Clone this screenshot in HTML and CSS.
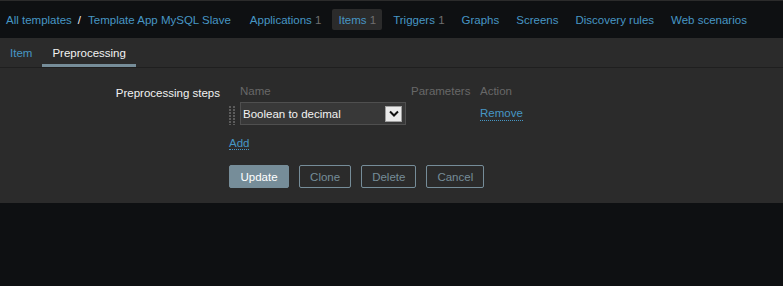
FILE: index.html
```html
<!DOCTYPE html>
<html lang="en">
<head>
<meta charset="utf-8">
<title>Template App MySQL Slave - Items</title>
<link rel="stylesheet" href="styles.css">
</head>
<body>
<nav class="topnav">
  <div class="crumbs">
    <a href="#" class="link">All templates</a>
    <span class="sep">/</span>
    <a href="#" class="link">Template App MySQL Slave</a>
  </div>
  <ul class="navlist">
    <li class="navitem"><a href="#" class="link">Applications</a> <span class="count">1</span></li>
    <li class="navitem selected"><a href="#" class="link">Items</a> <span class="count">1</span></li>
    <li class="navitem"><a href="#" class="link">Triggers</a> <span class="count">1</span></li>
    <li class="navitem"><a href="#" class="link">Graphs</a></li>
    <li class="navitem"><a href="#" class="link">Screens</a></li>
    <li class="navitem"><a href="#" class="link">Discovery rules</a></li>
    <li class="navitem"><a href="#" class="link">Web scenarios</a></li>
  </ul>
</nav>
<div class="tabs">
  <a href="#" class="tab">Item</a>
  <a href="#" class="tab active">Preprocessing</a>
</div>
<form class="form">
  <div class="form-row">
    <label class="form-label">Preprocessing steps</label>
    <div class="form-field">
      <div class="steps">
        <div class="steps-head">
          <span></span>
          <span>Name</span>
          <span>Parameters</span>
          <span>Action</span>
        </div>
        <div class="steps-row">
          <div class="drag"><span></span><span></span></div>
          <div class="select">
            <span class="select-text">Boolean to decimal</span>
            <span class="select-arrow">
              <svg width="10" height="7" viewBox="0 0 10 7"><polyline points="1,1.5 5,5.5 9,1.5" fill="none" stroke="#111" stroke-width="2"/></svg>
            </span>
          </div>
          <span></span>
          <a href="#" class="dotted">Remove</a>
        </div>
      </div>
      <div class="add-line"><a href="#" class="dotted">Add</a></div>
      <div class="buttons">
        <button type="button" class="btn primary">Update</button>
        <button type="button" class="btn alt">Clone</button>
        <button type="button" class="btn alt">Delete</button>
        <button type="button" class="btn alt">Cancel</button>
      </div>
    </div>
  </div>
</form>
</body>
</html>
```
FILE: styles.css
```css
html, body {
  margin: 0;
  padding: 0;
  background: #0e1012;
  font-family: "Liberation Sans", Arial, sans-serif;
  font-size: 11.5px;
  line-height: 14px;
  color: #f2f2f2;
}

a {
  text-decoration: none;
}

.link {
  color: #4796c4;
}

.topnav {
  border-top: 1px solid #2b2b2b;
  height: 37px;
  display: flex;
  align-items: center;
  padding-left: 6px;
  white-space: nowrap;
}

.crumbs {
  display: flex;
  align-items: center;
}

.sep {
  color: #f2f2f2;
  margin: 0 7px 0 6px;
}

.navlist {
  list-style: none;
  margin: 0 0 0 13px;
  padding: 0;
  display: flex;
  align-items: center;
  gap: 5px;
}

.navitem {
  padding: 4px 6px 3px;
  border-radius: 2px;
  white-space: nowrap;
}

.navitem.selected {
  background: #2b2b2b;
}

.count {
  color: #6f6f6f;
}

.tabs {
  background: #2b2b2b;
  height: 29px;
  border-bottom: 1px solid #1f1f1f;
  display: flex;
}

.tab {
  padding: 8px 10px 0;
  color: #4796c4;
  box-sizing: border-box;
  height: 29px;
  border-bottom: 3px solid transparent;
}

.tab.active {
  color: #f2f2f2;
  border-bottom-color: #768d99;
}

.form {
  background: #2b2b2b;
  margin: 0;
  padding: 16px 0 15px;
}

.form-row {
  display: grid;
  grid-template-columns: 220px 1fr;
  column-gap: 9px;
}

.form-label {
  text-align: right;
  padding-top: 2px;
  color: #f2f2f2;
}

.steps-head,
.steps-row {
  display: grid;
  grid-template-columns: 11px 171px 69px auto;
  align-items: center;
}

.steps-head {
  color: #686868;
  height: 14px;
}

.steps-row {
  margin-top: 4px;
  height: 23px;
}

.drag {
  display: flex;
  gap: 2px;
  height: 19px;
  align-self: end;
}

.drag span {
  width: 2px;
  height: 19px;
  background: repeating-linear-gradient(to bottom, #5c5c5c 0 2px, transparent 2px 3px);
}

.select {
  width: 166px;
  height: 23px;
  box-sizing: border-box;
  background: #383838;
  border: 1px solid #4f4f4f;
  display: flex;
  align-items: center;
  justify-content: space-between;
  padding: 0 3px 0 2px;
}

.select-text {
  color: #f2f2f2;
}

.select-arrow {
  width: 17px;
  height: 16px;
  box-sizing: border-box;
  background: #ebebeb;
  border: 1px solid #a0a0a0;
  display: flex;
  align-items: center;
  justify-content: center;
}

.dotted {
  color: #4796c4;
  border-bottom: 1px dotted #4796c4;
  justify-self: start;
}

.add-line {
  margin-top: 11px;
  height: 15px;
}

.buttons {
  margin-top: 14px;
  display: flex;
  gap: 10px;
}

.btn {
  font-family: "Liberation Sans", Arial, sans-serif;
  font-size: 11.5px;
  height: 23px;
  padding: 0 10px;
  border-radius: 2px;
  border: 1px solid #768d99;
  cursor: pointer;
}

.btn.primary {
  background: #768d99;
  color: #ffffff;
  padding: 0 10.5px;
}

.btn.alt {
  background: transparent;
  color: #768d99;
}
```
